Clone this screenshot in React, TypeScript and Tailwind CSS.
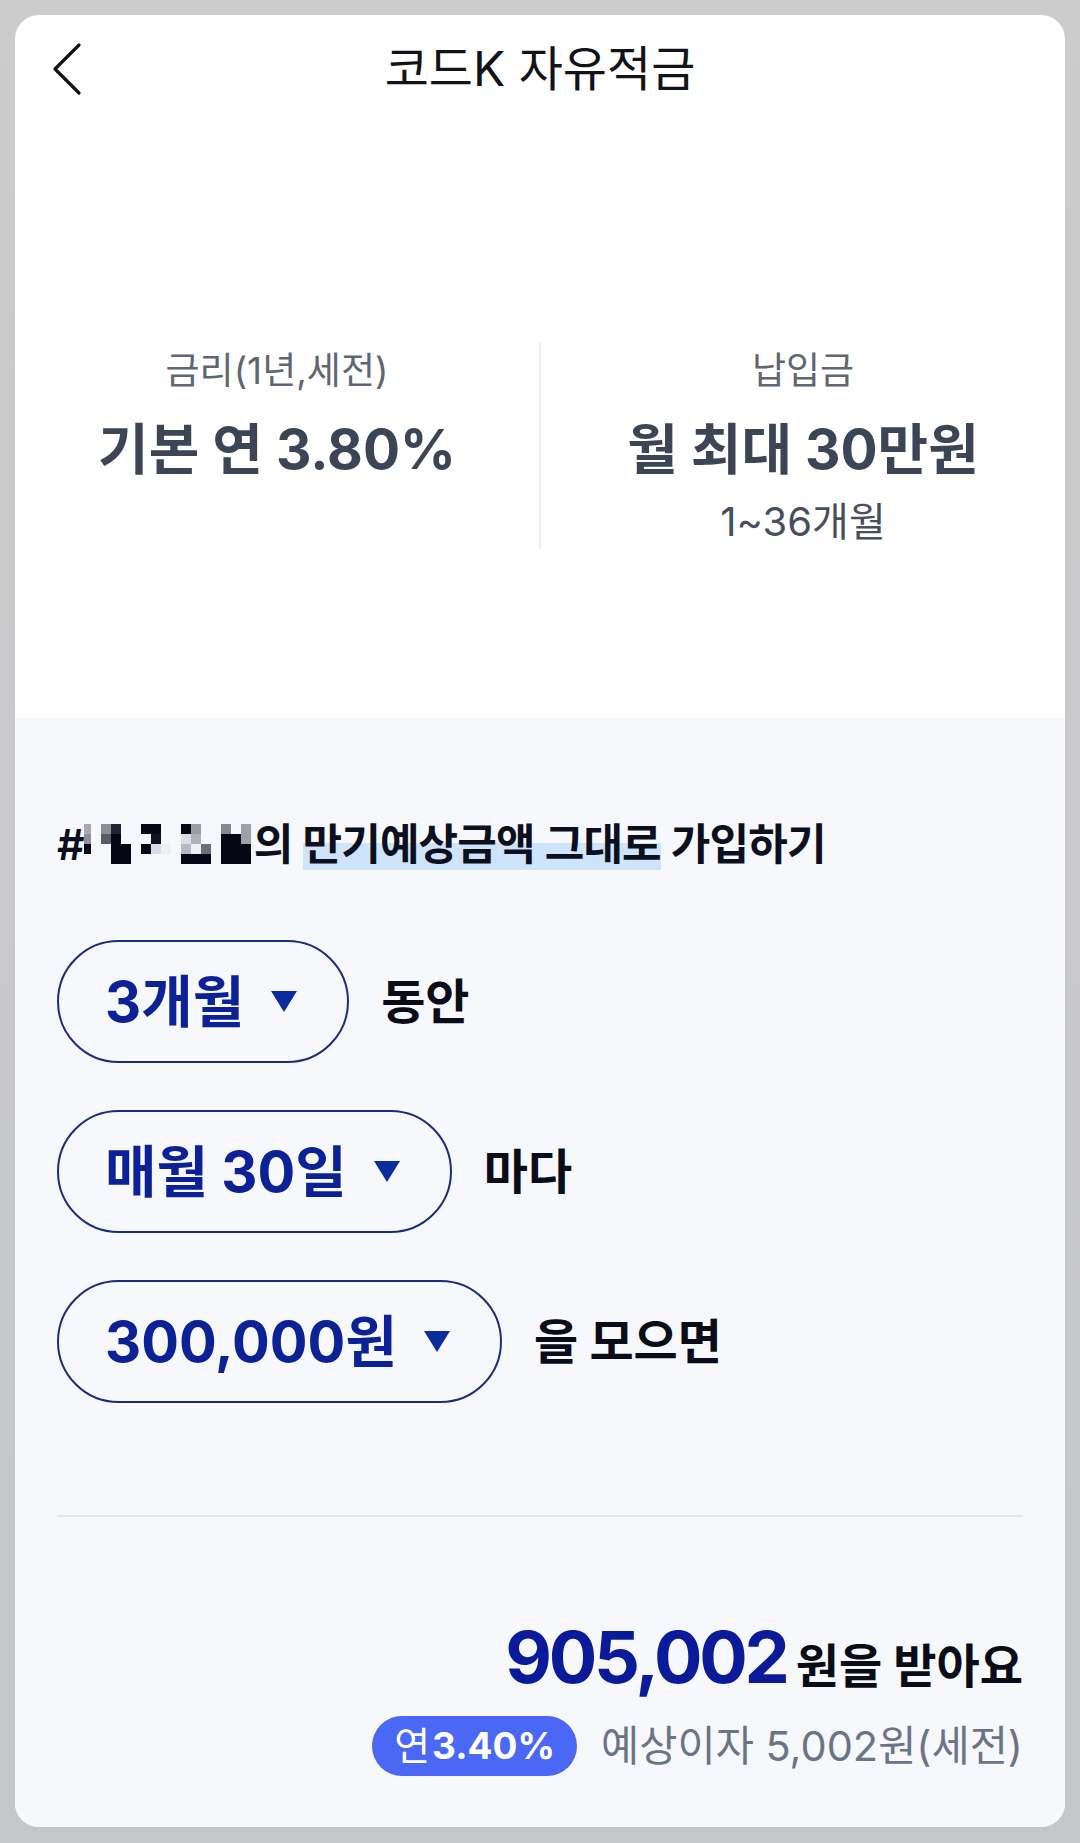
const FONT = {
  fontFamily: '"Inter", "Noto Sans CJK KR", "Noto Sans", sans-serif',
};

// pixelated (redacted) name block, drawn as cells
const MOSAIC: [number, number, number, string][] = [
  [0, 0, 7, "#a9a9b0"], [17, 0, 10, "#8d8e96"], [27, 0, 10, "#22252f"], [57, 0, 20, "#050814"],
  [97, 0, 10, "#050814"], [107, 0, 10, "#9d9da6"], [137, 0, 10, "#878890"], [157, 0, 10, "#a0a0a8"],
  [0, 10, 7, "#8e8f97"], [17, 10, 10, "#5a5d68"], [27, 10, 10, "#050814"], [67, 10, 10, "#101320"],
  [97, 10, 10, "#dcdde5"], [107, 10, 10, "#b0b1ba"], [137, 10, 20, "#050814"], [157, 10, 10, "#a0a0a8"],
  [0, 20, 7, "#050814"], [27, 20, 20, "#050814"], [57, 20, 10, "#050814"], [67, 20, 10, "#dcdce4"],
  [77, 20, 10, "#eff0f5"], [97, 20, 10, "#b8b9c2"], [107, 20, 10, "#eef0f6"], [117, 20, 10, "#6c6e7a"],
  [137, 20, 30, "#050814"],
  [27, 30, 20, "#050814"], [97, 30, 30, "#050814"], [137, 30, 30, "#050814"],
];

function Caret() {
  return (
    <svg width="26" height="21" viewBox="0 0 26 21" className="shrink-0">
      <path d="M0 0 H26 L13 21 Z" fill="#0b2c9e" />
    </svg>
  );
}

function Pill({ label, after }: { label: string; after: string }) {
  return (
    <div className="flex items-center gap-[32px]">
      <div className="flex h-[123px] items-center gap-[27px] rounded-full border-2 border-[#1d2b7c] pl-[46px] pr-[50px]">
        <span className="text-[56px] font-bold text-[#0c2196]">{label}</span>
        <Caret />
      </div>
      <span className="text-[48px] font-bold text-[#0a0d17]">{after}</span>
    </div>
  );
}

export default function App() {
  return (
    <div
      className="min-h-[1843px] bg-linear-to-b from-[#cccccc] to-[#c5c6ca] px-[15px] pt-[15px]"
      style={FONT}
    >
      <div className="flex h-[1812px] flex-col overflow-hidden rounded-[24px] bg-white">
        {/* header */}
        <div className="grid h-[108px] grid-cols-[1fr_auto_1fr] items-center">
          <div className="pl-[37px]">
            <svg width="30" height="54" viewBox="0 0 30 54" fill="none">
              <path d="M27 3 L3 27 L27 51" stroke="#111318" strokeWidth="3.2" strokeLinecap="round" strokeLinejoin="round" />
            </svg>
          </div>
          <h1 className="text-[48px] font-normal text-[#111318]">코드K 자유적금</h1>
          <div />
        </div>

        {/* summary */}
        <div className="mt-[220px] flex">
          <div className="flex flex-1 flex-col items-center">
            <p className="text-[37px] leading-[56px] text-[#5f6674]">금리(1년,세전)</p>
            <p className="mt-[18px] text-[55px] font-bold leading-[64px] text-[#3b4556]">기본 연 3.80%</p>
          </div>
          <div className="h-[206px] w-[2px] bg-[#eceef1]" />
          <div className="flex flex-1 flex-col items-center">
            <p className="text-[37px] leading-[56px] text-[#5f6674]">납입금</p>
            <p className="mt-[18px] text-[55px] font-bold leading-[64px] text-[#3b4556]">월 최대 30만원</p>
            <p className="mt-[17px] text-[40px] leading-[48px] text-[#474f5d]">1~36개월</p>
          </div>
        </div>

        {/* calculator */}
        <div className="mt-[169px] flex flex-1 flex-col bg-[#f6f8fc] px-[42px] pt-[98px]">
          <div className="flex h-[56px] items-center text-[43px] font-semibold leading-[56px] tracking-[-0.02em] text-[#0b0f1e]">
            <span>#</span>
            <svg width="170" height="40" viewBox="0 0 170 40" className="shrink-0">
              {MOSAIC.map(([x, y, w, c], i) => (
                <rect key={i} x={x} y={y} width={w} height={10} fill={c} />
              ))}
            </svg>
            <span className="whitespace-pre">
              의{" "}
              <span className="bg-linear-to-b from-transparent from-48% to-[#cfe4fa] to-48%">만기예상금액 그대로</span>{" "}
              가입하기
            </span>
          </div>

          <div className="mt-[68px] flex flex-col gap-[47px]">
            <Pill label="3개월" after="동안" />
            <Pill label="매월 30일" after="마다" />
            <Pill label="300,000원" after="을 모으면" />
          </div>

          <div className="mt-[112px] h-[2px] bg-[#e3e6eb]" />

          <div className="mt-[96px] flex items-baseline justify-end gap-[9px] leading-[88px]">
            <span className="text-[72px] font-bold tracking-[-0.045em] text-[#0a1a99]">905,002</span>
            <span className="text-[47px] font-bold text-[#0a0d17]">원을 받아요</span>
          </div>

          <div className="mt-[5px] flex items-center justify-end gap-[24px]">
            <div className="flex h-[60px] items-center gap-[2px] rounded-full bg-[#4a67f5] px-[22px] text-white">
              <span className="text-[39px]">연</span>
              <span className="text-[37px] font-bold">3.40%</span>
            </div>
            <span className="text-[41.5px] text-[#6b7486]">예상이자 5,002원(세전)</span>
          </div>
        </div>
      </div>
    </div>
  );
}
